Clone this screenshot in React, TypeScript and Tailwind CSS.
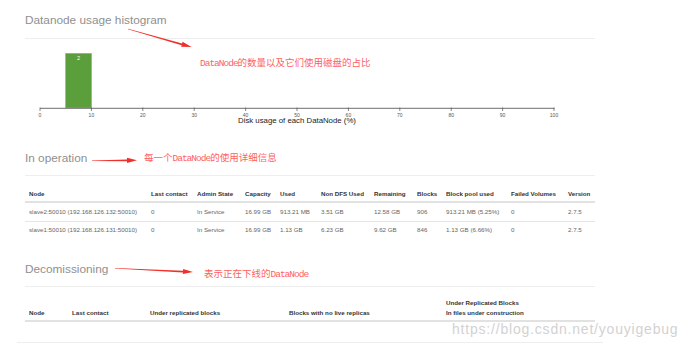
import React from 'react';

const ticks = [0, 10, 20, 30, 40, 50, 60, 70, 80, 90, 100];
const px = (pct: number) => 40 + pct * 5.14;

const opCols = 'grid grid-cols-[122px_46px_48px_35px_41px_53px_43px_29px_65px_57px_31px]';
const decomCols = 'grid grid-cols-[43px_78px_139px_157px_153px]';

const opHead = ['Node', 'Last contact', 'Admin State', 'Capacity', 'Used', 'Non DFS Used', 'Remaining', 'Blocks', 'Block pool used', 'Failed Volumes', 'Version'];
const opRows = [
    ['slave2:50010 (192.168.126.132:50010)', '0', 'In Service', '16.99 GB', '913.21 MB', '3.51 GB', '12.58 GB', '906', '913.21 MB (5.25%)', '0', '2.7.5'],
    ['slave1:50010 (192.168.126.131:50010)', '0', 'In Service', '16.99 GB', '1.13 GB', '6.23 GB', '9.62 GB', '846', '1.13 GB (6.66%)', '0', '2.7.5'],
];

// tapered red arrow like the hand-drawn annotations
const Arrow = ({ x1, y1, x2, y2 }: { x1: number; y1: number; x2: number; y2: number }) => {
    const dx = x2 - x1;
    const dy = y2 - y1;
    const len = Math.hypot(dx, dy);
    const ux = dx / len;
    const uy = dy / len;
    const nx = -uy;
    const ny = ux;
    const hl = 10;
    const bx = x2 - ux * hl;
    const by = y2 - uy * hl;
    const pts = [
        [x1 + nx * 0.3, y1 + ny * 0.3],
        [bx + nx * 0.9, by + ny * 0.9],
        [bx + nx * 2.6, by + ny * 2.6],
        [x2, y2],
        [bx - nx * 2.6, by - ny * 2.6],
        [bx - nx * 0.9, by - ny * 0.9],
        [x1 - nx * 0.3, y1 - ny * 0.3],
    ];
    return <polygon points={pts.map((p) => p.join(',')).join(' ')} fill="#f0302a" />;
};

const Note = ({ text, latin, rest, className }: { text: string; latin: string; rest: string; className: string }) => (
    <div className={`absolute whitespace-nowrap text-[9.5px] leading-[12px] text-[#ff5f5f] font-['Noto_Sans_CJK_SC',serif] ${className}`}>
        {text}
        <span className="font-['Liberation_Mono',monospace] tracking-[-1px]">{latin}</span>
        {rest}
    </div>
);

export default function App() {
    return (
        <div className="relative w-[687px] h-[348px] overflow-hidden bg-white font-['Liberation_Sans',Arial,sans-serif]">
            <div className="ml-[25px] w-[570px]">
                {/* Histogram */}
                <div className="h-[39px] pt-[13px] border-b border-[#eeeeee]">
                    <h2 className="text-[11.8px] leading-[14px] text-[#8f8f8f]">Datanode usage histogram</h2>
                </div>
                <svg className="block" width="570" height="89" viewBox="25 39 570 89">
                    <rect x={px(5)} y="53.5" width={px(10) - px(5)} height={108 - 53.5} fill="#5b9f3c" stroke="#78b35c" strokeWidth="0.6" />
                    <text x={(px(5) + px(10)) / 2} y="60" fill="#ffffff" fontSize="5.5" textAnchor="middle">2</text>
                    <line x1="40" y1="108.3" x2="554.5" y2="108.3" stroke="#8a8a8a" strokeWidth="1.2" />
                    {ticks.map((t) => (
                        <g key={t}>
                            <line x1={px(t)} y1="107.5" x2={px(t)} y2="111" stroke="#555" strokeWidth="0.7" />
                            <text x={px(t)} y="116.5" fill="#555" fontSize="5" textAnchor="middle">{t}</text>
                        </g>
                    ))}
                    <text x="297" y="123" fill="#222" fontSize="7.8" textAnchor="middle">Disk usage of each DataNode (%)</text>
                </svg>

                {/* In operation */}
                <div className="h-[48px] pt-[23px] border-b border-[#eeeeee]">
                    <h2 className="text-[11.8px] leading-[14px] text-[#8f8f8f]">In operation</h2>
                </div>
                <div className="text-[6.2px]">
                    <div className={`${opCols} h-[27px] items-end pb-[3px] border-b-2 border-[#e2e2e2] font-bold text-[#333]`}>
                        {opHead.map((h) => (
                            <div key={h} className="pl-[4px] leading-[8px] whitespace-nowrap">{h}</div>
                        ))}
                    </div>
                    {opRows.map((r, i) => (
                        <div key={i} className={`${opCols} h-[17.5px] items-center text-[#666] ${i > 0 ? 'border-t border-[#e6e6e6]' : ''}`}>
                            {r.map((c, j) => (
                                <div key={j} className="pl-[4px] whitespace-nowrap">{c}</div>
                            ))}
                        </div>
                    ))}
                </div>

                {/* Decomissioning */}
                <div className="h-[49px] pt-[24px] border-b border-[#eeeeee]">
                    <h2 className="text-[11.8px] leading-[14px] text-[#8f8f8f]">Decomissioning</h2>
                </div>
                <div className={`${decomCols} h-[35px] items-end pb-[3px] border-b-2 border-[#e2e2e2] text-[6.2px] leading-[9.4px] font-bold text-[#333]`}>
                    <div className="pl-[4px]">Node</div>
                    <div className="pl-[4px]">Last contact</div>
                    <div className="pl-[4px]">Under replicated blocks</div>
                    <div className="pl-[4px]">Blocks with no live replicas</div>
                    <div className="pl-[4px]">
                        Under Replicated Blocks
                        <br />
                        In files under construction
                    </div>
                </div>
                <div className="mt-[20px] -ml-[8px] w-[586px] border-t border-[#eeeeee]" />
            </div>

            {/* annotations */}
            <svg className="absolute inset-0 pointer-events-none" width="687" height="348">
                <Arrow x1={128} y1={29} x2={191.5} y2={47} />
                <Arrow x1={92} y1={160.8} x2={137} y2={160.3} />
                <Arrow x1={115} y1={268.3} x2={193} y2={272} />
            </svg>
            <Note className="left-[200px] top-[56px]" text="" latin="DataNode" rest="的数量以及它们使用磁盘的占比" />
            <Note className="left-[144px] top-[151px]" text="每一个" latin="DataNode" rest="的使用详细信息" />
            <Note className="left-[204px] top-[267px]" text="表示正在下线的" latin="DataNode" rest="" />

            <div className="absolute left-[452px] top-[321px] text-[14px] leading-[16px] tracking-[0.8px] text-[#d2d2d2] whitespace-nowrap">
                https://blog.csdn.net/youyigebug
            </div>
        </div>
    );
}
